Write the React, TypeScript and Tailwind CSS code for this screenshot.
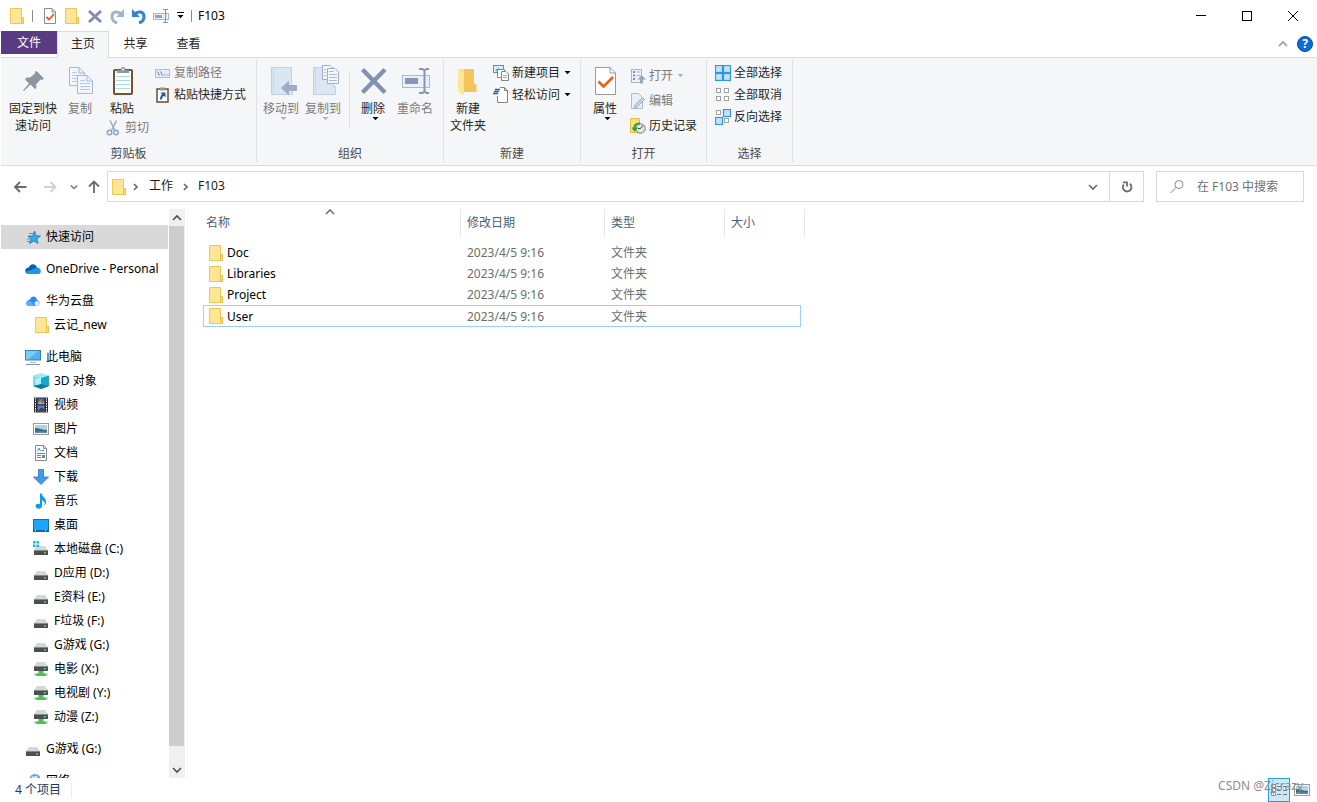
import type { ReactNode } from 'react';

type IconProps = { className?: string };

/* ---------- Icons ---------- */

function FolderIcon({ className = 'h-4 w-4' }: IconProps) {
  return (
    <svg viewBox="0 0 16 16" className={className}>
      <path d="M0.500 0.500H11.500V9.500H13.500V15.500H0.500Z" fill="#ffe694" stroke="#ecc857" />
      <path d="M11.500 9.500H13.500V15.500H11.500Z" fill="#fbdc7c" stroke="#e9c24c" />
    </svg>
  );
}

function CheckDocIcon({ className = 'h-4 w-4' }: IconProps) {
  return (
    <svg viewBox="0 0 16 16" className={className} fill="none">
      <path d="M2.500 0.500H10L13.500 4V15.500H2.500Z" fill="#fff" stroke="#8a8a8a" />
      <path d="M10 0.500V4H13.500" stroke="#8a8a8a" />
      <path d="M4.500 9L7 11.500L12 6" stroke="#f0531c" strokeWidth="1.800" />
    </svg>
  );
}

function CrossIcon() {
  return (
    <svg viewBox="0 0 16 16" className="h-4 w-4" fill="none">
      <path d="M2 3L14 14M14 3L2 14" stroke="#7d8eb0" strokeWidth="3" />
    </svg>
  );
}

function DeleteIcon() {
  return (
    <svg viewBox="0 0 32 32" className="h-8 w-8" fill="none">
      <path d="M5.500 4.500L28 27.500M28 4.500L5.500 27.500" stroke="#8091b3" strokeWidth="4.400" />
    </svg>
  );
}

function RedoIcon() {
  return (
    <svg viewBox="0 0 16 16" className="h-4 w-4" fill="none">
      <path d="M12 6C9 2.500 3 3.500 3 8.500C3 12 5 14 8 15" stroke="#a3b3ca" strokeWidth="3" />
      <path d="M15 1V9H7Z" fill="#a3b3ca" />
    </svg>
  );
}

function UndoIcon() {
  return (
    <svg viewBox="0 0 16 16" className="h-4 w-4" fill="none">
      <path d="M4 6C7 2.500 13 3.500 13 8.500C13 12 11 14 8 15" stroke="#2e86d1" strokeWidth="3" />
      <path d="M1 1V9H9Z" fill="#2e86d1" />
    </svg>
  );
}

function RenameIcon({ className = 'h-4 w-4' }: IconProps) {
  return (
    <svg viewBox="0 0 16 16" className={className} fill="none">
      <rect x="0.500" y="5.500" width="15" height="6" fill="#eef3fb" stroke="#a3b6d3" />
      <rect x="2" y="7" width="7" height="3" fill="#8ea2c5" />
      <path d="M10 1.500H15M12.500 1.500V14.500M10 14.500H15" stroke="#8797b4" strokeWidth="1.200" />
    </svg>
  );
}

function RenameLargeIcon() {
  return (
    <svg viewBox="0 0 32 32" className="h-8 w-8" fill="none">
      <rect x="3.500" y="10.500" width="27" height="12" fill="#e9f0fa" stroke="#a9bad6" />
      <rect x="6" y="13" width="13" height="6" fill="#8497bb" />
      <path d="M20 4H23.500L25.500 5.500L27.500 4H30M25.500 5V27M20 28H23.500L25.500 26.500L27.500 28H30" stroke="#8597b6" strokeWidth="2" />
    </svg>
  );
}

function PinIcon() {
  return (
    <svg viewBox="0 0 32 32" className="h-8 w-8">
      <path d="M19.500 6L27 13.500L25 15L23.500 14.500L19 19.500L19.500 23L18 24L13.500 19.500L7 26L6 25.500L12 18.500L8 14.500L9.500 12.500H13L18 8.500L18 7Z" fill="#8b979f" />
    </svg>
  );
}

function SheetLines({ x, y }: { x: number; y: number }) {
  return (
    <g transform={`translate(${x} ${y})`} fill="none">
      <path d="M0.500 0.500H10L15.500 6V18.500H0.500Z" fill="#f1f6fd" stroke="#a5b8d7" />
      <path d="M10 0.500V6H15.500" stroke="#a5b8d7" />
      <path d="M3 5.500H8M3 8.500H13M3 11.500H13M3 14.500H13" stroke="#b5cbe9" />
    </g>
  );
}

function CopyIcon() {
  return (
    <svg viewBox="0 0 32 32" className="h-8 w-8">
      <SheetLines x={5} y={2} />
      <SheetLines x={13} y={10} />
    </svg>
  );
}

function PasteIcon() {
  return (
    <svg viewBox="0 0 32 32" className="h-8 w-8" fill="none">
      <rect x="8" y="5" width="18" height="24" rx="1" fill="#fff" stroke="#7b4f31" strokeWidth="2" />
      <path d="M10 11.500H24M10 15.500H24M10 19.500H24M10 23.500H24" stroke="#a9d8ef" />
      <path d="M11 8V5H14.500C15 1 19 1 19.500 5H23V8Z" fill="#8e979c" />
      <circle cx="17" cy="4.500" r="1" fill="#fff" />
    </svg>
  );
}

function CutIcon() {
  return (
    <svg viewBox="0 0 16 16" className="h-4 w-4" fill="none">
      <path d="M4 0.500L9 10.500M10.500 0.500L5.500 10.500" stroke="#9aabc5" strokeWidth="1.600" />
      <circle cx="3.500" cy="12.500" r="2.300" stroke="#8fa3c2" strokeWidth="1.400" />
      <circle cx="10" cy="12.500" r="2.300" stroke="#8fa3c2" strokeWidth="1.400" />
    </svg>
  );
}

function PathIcon() {
  return (
    <svg viewBox="0 0 16 16" className="h-4 w-4" fill="none">
      <rect x="0.500" y="4.500" width="14" height="8" fill="#e3ecf8" stroke="#aebfd9" />
      <path d="M2.500 6.500L4.500 10.500M5.500 6.500L7.500 10.500M8.500 10H9.500M10.500 10H11.500M12.500 10H13.500" stroke="#6d81a5" />
    </svg>
  );
}

function PasteShortcutIcon() {
  return (
    <svg viewBox="0 0 16 16" className="h-4 w-4" fill="none">
      <rect x="2" y="2" width="11" height="13" fill="#fff" stroke="#6e4a32" strokeWidth="1.500" />
      <path d="M5 0.500H10V3.500H5Z" fill="#8e979c" />
      <path d="M5.500 5.500H10.500V10.500L8.800 8.800C7.500 9.800 7 11 7 12.500H5C5 10.300 5.700 8.600 7.200 7.200Z" fill="#1c5a9c" />
    </svg>
  );
}

function MoveToIcon() {
  return (
    <svg viewBox="0 0 32 32" className="h-8 w-8">
      <path d="M6.500 2.500H26.500V21.500H27.500V29.500H6.500Z" fill="#dbe6f5" stroke="#c0cfe6" />
      <path d="M8.500 3V29" stroke="#cad8ec" />
      <path d="M16 23L24 15.500V20H32V26H24V30.500Z" fill="#9dadc8" />
    </svg>
  );
}

function CopyToIcon() {
  return (
    <svg viewBox="0 0 32 32" className="h-8 w-8" fill="none">
      <path d="M6.500 2.500H26.500V21.500H28.500V29.500H6.500Z" fill="#dbe6f5" stroke="#c0cfe6" />
      <path d="M8.500 3V29" stroke="#cad8ec" />
      <path d="M15.500 0.500H23L26.500 4V14.500H15.500Z" fill="#f4f8fd" stroke="#9db0cf" />
      <path d="M20.500 3.500H28L31.500 7V18.500H20.500Z" fill="#f4f8fd" stroke="#9db0cf" />
      <path d="M17 4.500H19M17 7.500H19M17 10.500H19M22 6.500H27M22 9.500H30M22 12.500H30M22 15.500H30" stroke="#aabbd6" />
    </svg>
  );
}

function NewFolderIcon() {
  return (
    <svg viewBox="0 0 32 32" className="h-8 w-8">
      <path d="M11 4H22V18L24.500 20V27H11Z" fill="#f2c65c" />
      <path d="M6 4H12L12 24L11 30L6 26Z" fill="#ffe08a" />
      <path d="M6 4L12 8V30L6 26Z" fill="#ffe59c" />
    </svg>
  );
}

function NewItemIcon() {
  return (
    <svg viewBox="0 0 16 16" className="h-4 w-4" fill="none">
      <rect x="0.500" y="0.500" width="10" height="7" fill="#d8effb" stroke="#5c8fb4" />
      <path d="M2 6L5 3L9 6Z" fill="#3e9bce" />
      <path d="M4.500 4.500H11.500V12.500H4.500Z" fill="#fff" stroke="#858585" />
      <path d="M8.500 6.500H13L15.500 9V15.500H8.500Z" fill="#fff" stroke="#858585" />
      <path d="M10 10.500H14M10 12.500H14" stroke="#7fb4d8" />
    </svg>
  );
}

function EasyAccessIcon() {
  return (
    <svg viewBox="0 0 16 16" className="h-4 w-4" fill="none">
      <path d="M4.500 0.500H11.500L14.500 3.500V15.500H4.500Z" fill="#fff" />
      <path d="M7 0.500H11.500L14.500 3.500V15.500H4.500V9M11.500 0.500V3.500H14.500" stroke="#858585" />
      <path d="M2 2.500H7M1 4.500H6M0 6.500H5" stroke="#1667ae" strokeWidth="1.400" />
    </svg>
  );
}

function PropertiesIcon() {
  return (
    <svg viewBox="0 0 32 32" className="h-8 w-8" fill="none">
      <path d="M6.500 2.500H21L26.500 8V29.500H6.500Z" fill="#fff" stroke="#9a9a9a" />
      <path d="M21 2.500V8H26.500" stroke="#9a9a9a" />
      <path d="M9.500 16.500L14.500 21.500L24 12" stroke="#f25a1d" strokeWidth="2.600" />
    </svg>
  );
}

function OpenIcon() {
  return (
    <svg viewBox="0 0 16 16" className="h-4 w-4" fill="none">
      <rect x="1.500" y="1.500" width="10" height="13" fill="#edf2fa" stroke="#a5b5d0" />
      <path d="M3 4H5M3 7.500H5M3 11H5" stroke="#7890b8" strokeWidth="2" />
      <path d="M6.500 4H10M6.500 7.500H10" stroke="#a5b5d0" />
      <path d="M11.500 7L16 11.500H13V15.500H10V11.500H7.500Z" fill="#93a5c4" />
    </svg>
  );
}

function EditIcon() {
  return (
    <svg viewBox="0 0 16 16" className="h-4 w-4" fill="none">
      <path d="M1.500 0.500H8.500L12.500 4.500V15.500H1.500Z" fill="#e8eff9" stroke="#a9badb" />
      <path d="M5 12L12.500 4.500L14.500 6.500L7 14L4.500 14.500Z" fill="#c4d1e6" stroke="#8fa2c4" strokeWidth="0.800" />
    </svg>
  );
}

function HistoryIcon() {
  return (
    <svg viewBox="0 0 16 16" className="h-4 w-4" fill="none">
      <path d="M0.500 0.500H9.500V14.500H0.500Z" fill="#ffe27a" stroke="#e8bf3f" />
      <circle cx="10.500" cy="10.500" r="4.700" fill="#e4e4e4" stroke="#777" />
      <path d="M10.500 10.500L13 7.500M10.500 10.500H8" stroke="#444" />
      <path d="M10 5.500C6 5 4 8 4.500 10" stroke="#27a53a" strokeWidth="2" />
      <path d="M1.500 9.500H8L4.500 14Z" fill="#27a53a" />
    </svg>
  );
}

function SelectIcon({ filled }: { filled: boolean[] }) {
  const cells = [[1, 1], [9, 1], [1, 9], [9, 9]];
  return (
    <svg viewBox="0 0 16 16" className="h-4 w-4">
      {cells.map(([x, y], i) =>
        filled[i] ? (
          <rect key={i} x={x - 0.5} y={y - 0.5} width="7" height="7" fill="#bfe3fb" stroke="#3095e4" strokeWidth="1.200" />
        ) : (
          <rect key={i} x={x + 0.5} y={y + 0.5} width="4" height="4" fill="#fff" stroke="#a2a2a2" />
        ),
      )}
    </svg>
  );
}

function Chevron({ dir, size = 'h-2.5 w-2.5', className = '' }: { dir: 'up' | 'down' | 'right'; size?: string; className?: string }) {
  const paths = { up: 'M1 7L5 3L9 7', down: 'M1 3L5 7L9 3', right: 'M3 2L6 5L3 8' };
  return (
    <svg viewBox="0 0 10 10" className={`${size} ${className}`} fill="none" stroke="currentColor" strokeWidth="1.700">
      <path d={paths[dir]} />
    </svg>
  );
}

function Caret({ className = 'text-black' }: IconProps) {
  return (
    <svg viewBox="0 0 7 4" className={`h-1 w-[7px] ${className}`}>
      <path d="M0.500 0H6.500L3.500 3.200Z" fill="currentColor" />
    </svg>
  );
}

function ArrowIcon({ dir, className = 'text-[#6a6a6a]' }: { dir: 'left' | 'right' | 'up'; className?: string }) {
  const paths = {
    left: 'M14.500 8H3M8 3L3 8L8 13',
    right: 'M2 8H13.500M8.500 3L13.500 8L8.500 13',
    up: 'M8 14V2.500M3 7.500L8 2.500L13 7.500',
  };
  return (
    <svg viewBox="0 0 16 16" className={`h-4 w-4 ${className}`} fill="none" stroke="currentColor" strokeWidth="1.800">
      <path d={paths[dir]} />
    </svg>
  );
}

function StarIcon() {
  return (
    <svg viewBox="0 0 16 16" className="h-4 w-4">
      <path d="M9.500 2L11 6.500L15.500 7L12 9.700L13 14.500L9 12L4.500 14.500L6.200 9.700L3 7H7.700Z" fill="#35a8ec" stroke="#1778c2" strokeWidth="0.800" />
      <path d="M4 4.500H8M2 10H5M2 12.500H5" stroke="#3a9be0" />
    </svg>
  );
}

function OneDriveIcon() {
  return (
    <svg viewBox="0 0 16 16" className="h-4 w-4">
      <path d="M4 6.500C5 2.500 10.500 2 12 6.500L9 9L3 12.500C-0.500 12 -1 6.500 4 6.500Z" fill="#0a5cb5" />
      <path d="M12 6.500C16.500 6.500 17 12.500 13.500 13H3.500C1.500 13 0.500 12 0.500 11L8 8Z" fill="#1e97e4" />
    </svg>
  );
}

function CloudIcon() {
  return (
    <svg viewBox="0 0 16 16" className="h-4 w-4">
      <path d="M5 6.500C6 2.500 11.500 2.500 12 7C15.500 7.500 15.500 13 12 13H4.500C0 13 0 7.500 5 6.500Z" fill="#2f87f7" />
      <path d="M1.500 10C2 7 6 6.500 9 13H4.500C2.500 13 1.500 12 1.500 10Z" fill="#55b1ff" />
      <circle cx="12" cy="10.500" r="2.500" fill="#dceaff" />
    </svg>
  );
}

function ComputerIcon() {
  return (
    <svg viewBox="0 0 16 16" className="h-4 w-4">
      <rect x="0.500" y="1.500" width="15" height="9.500" fill="#4fb4ef" stroke="#3c7ca6" />
      <path d="M1 2H13L3 10.500H1Z" fill="#7ccdf9" />
      <path d="M5 13.500H11" stroke="#a8b8c4" />
      <path d="M1 15.500H15" stroke="#7f93a3" />
    </svg>
  );
}

function CubeIcon() {
  return (
    <svg viewBox="0 0 16 16" className="h-4 w-4">
      <path d="M0 2.500L8 0L16 2.500L8 5Z" fill="#9ceaf3" />
      <path d="M0 2.500L8 5V16L0 13Z" fill="#7fdfe8" />
      <path d="M16 2.500L8 5V16L16 13Z" fill="#1ba6cf" />
      <path d="M2 6L8 5V12L3 12Z" fill="#b5f0f5" />
      <path d="M0 13L8 11L16 13L8 16Z" fill="#0b7f97" />
    </svg>
  );
}

function VideoIcon() {
  return (
    <svg viewBox="0 0 16 16" className="h-4 w-4">
      <rect x="1" y="0.500" width="14" height="15" fill="#2d2d2d" />
      <path d="M2.500 1V15M13.500 1V15" stroke="#fff" strokeDasharray="1.500 1" />
      <rect x="4.500" y="1.500" width="7" height="6" fill="#3f6fd0" />
      <rect x="4.500" y="8.500" width="7" height="6" fill="#4b80dd" />
      <path d="M5 6L8 3L11 5V7H5Z" fill="#d8a036" />
      <path d="M5 14L8 10.500L11 12V14Z" fill="#4a3b2a" />
      <circle cx="9" cy="4.500" r="1.200" fill="#c7402f" />
    </svg>
  );
}

function PictureIcon() {
  return (
    <svg viewBox="0 0 16 16" className="h-4 w-4">
      <rect x="0.500" y="2.500" width="15" height="11" fill="#fff" stroke="#9b9b9b" />
      <rect x="2" y="4" width="12" height="8" fill="#a9d4f2" />
      <path d="M2 7C6 7 9 9 14 9V12H2Z" fill="#3d6c74" />
      <path d="M2 10.500H14V12H2Z" fill="#5d8fbd" />
    </svg>
  );
}

function DocumentIcon() {
  return (
    <svg viewBox="0 0 16 16" className="h-4 w-4" fill="none">
      <path d="M2.500 0.500H10.500L13.500 3.500V15.500H2.500Z" fill="#fff" stroke="#8c8c8c" />
      <path d="M10.500 0.500V3.500H13.500" stroke="#8c8c8c" />
      <path d="M4.500 6L6 3L7.500 6M8.500 5.500H11M4 8.500H12M4 10.500H8M4 12.500H8" stroke="#3a94d4" />
      <rect x="9" y="10" width="3" height="3" fill="#5d8aa8" />
    </svg>
  );
}

function DownloadIcon() {
  return (
    <svg viewBox="0 0 16 16" className="h-4 w-4">
      <path d="M5.500 0.500H10.500V8H15.500L8 15.500L0.500 8H5.500Z" fill="#3d9be9" stroke="#2a79c0" strokeWidth="0.800" />
    </svg>
  );
}

function MusicIcon() {
  return (
    <svg viewBox="0 0 16 16" className="h-4 w-4">
      <path d="M7 0.500H9C9 4 13.500 5 13 9.500C13 11 12 12 11.500 12.500C12 9.500 11.500 8 9 7.500V13C9 16.500 2.500 16.500 2.500 13.200C2.500 11 5 10.300 7 11Z" fill="#0c9bf0" />
    </svg>
  );
}

function DesktopIcon() {
  return (
    <svg viewBox="0 0 16 16" className="h-4 w-4">
      <rect x="0.500" y="2.500" width="15" height="12" fill="#1ea5fb" stroke="#0d72b8" />
      <path d="M1 13.500H15" stroke="#0b5f9e" />
      <path d="M2 13.500H4M12 13.500H14" stroke="#fff" strokeDasharray="1 1" />
    </svg>
  );
}

function DriveIcon({ kind = 'plain' }: { kind?: 'plain' | 'windows' | 'network' }) {
  const top = kind === 'network' ? 1 : kind === 'windows' ? 5 : 6;
  return (
    <svg viewBox="0 0 16 16" className="h-4 w-4">
      <g transform={`translate(0 ${top})`}>
        <path d="M4 0H12L15 4H1Z" fill="#d5d8da" />
        <rect x="1" y="4" width="14" height="5" rx="0.500" fill="#4c4f52" />
        <path d="M1 4.500H15" stroke="#85898c" />
        <rect x="11" y="6" width="2" height="1.500" fill="#41e04b" />
      </g>
      {kind === 'windows' && (
        <path d="M0 0H2.500V2.500H0ZM3.500 0H6V2.500H3.500ZM0 3.500H2.500V6H0ZM3.500 3.500H6V6H3.500Z" fill="#12b5ee" />
      )}
      {kind === 'network' && (
        <>
          <path d="M1 13.500H15" stroke="#c3c8c5" strokeWidth="2" />
          <path d="M5.500 10H10.500V12.500H13V15H3V12.500H5.500Z" fill="#4cc152" />
        </>
      )}
    </svg>
  );
}

function NetworkIcon() {
  return (
    <svg viewBox="0 0 16 16" className="h-4 w-4">
      <circle cx="10" cy="6.500" r="5.500" fill="#5ba7cf" />
      <path d="M6 4C8 2 9 5 11 2.500L13 4L10 7Z" fill="#d2ecf5" />
      <rect x="1" y="6" width="9" height="7" fill="#78c6ee" stroke="#4a7f9f" />
    </svg>
  );
}

/* ---------- Ribbon pieces ---------- */

function BigButton({ icon, lines, width = 'w-[42px]', disabled, caret }: {
  icon: ReactNode;
  lines: string[];
  width?: string;
  disabled?: boolean;
  caret?: boolean;
}) {
  return (
    <button type="button" disabled={disabled} className={`flex flex-col items-center pt-[5px] ${width} ${disabled ? 'text-[#7b7b7b]' : 'text-[#262626]'}`}>
      {icon}
      <span className="mt-[3px] flex flex-col whitespace-nowrap leading-[17px]">
        {lines.map((line) => (
          <span key={line}>{line}</span>
        ))}
      </span>
      {caret && (
        <span className="pl-1">
          <Caret className={disabled ? 'text-[#b5b5b5]' : 'text-black'} />
        </span>
      )}
    </button>
  );
}

function SmallButton({ icon, label, disabled, caret }: {
  icon: ReactNode;
  label: string;
  disabled?: boolean;
  caret?: boolean;
}) {
  return (
    <button type="button" disabled={disabled} className={`flex items-center gap-[3px] whitespace-nowrap leading-[22px] ${disabled ? 'text-[#7b7b7b]' : 'text-[#262626]'}`}>
      {icon}
      {label}
      {caret && (
        <span className="pl-px">
          <Caret className={disabled ? 'text-[#b5b5b5]' : 'text-black'} />
        </span>
      )}
    </button>
  );
}

function RibbonGroup({ label, className = '', children }: { label: string; className?: string; children: ReactNode }) {
  return (
    <section aria-label={label} className="flex flex-col border-r border-[#e0e1e2]">
      <div className={`flex flex-1 items-start ${className}`}>{children}</div>
      <div className="text-center leading-[17px] text-[#4a4a4a]">{label}</div>
    </section>
  );
}

/* ---------- Data ---------- */

type NavEntry = { label: string; icon: ReactNode; child?: boolean; active?: boolean };

const navGroups: NavEntry[][] = [
  [{ label: '快速访问', icon: <StarIcon />, active: true }],
  [{ label: 'OneDrive - Personal', icon: <OneDriveIcon /> }],
  [
    { label: '华为云盘', icon: <CloudIcon /> },
    { label: '云记_new', icon: <FolderIcon className="ml-0.5 h-4 w-4" />, child: true },
  ],
  [
    { label: '此电脑', icon: <ComputerIcon /> },
    { label: '3D 对象', icon: <CubeIcon />, child: true },
    { label: '视频', icon: <VideoIcon />, child: true },
    { label: '图片', icon: <PictureIcon />, child: true },
    { label: '文档', icon: <DocumentIcon />, child: true },
    { label: '下载', icon: <DownloadIcon />, child: true },
    { label: '音乐', icon: <MusicIcon />, child: true },
    { label: '桌面', icon: <DesktopIcon />, child: true },
    { label: '本地磁盘 (C:)', icon: <DriveIcon kind="windows" />, child: true },
    { label: 'D应用 (D:)', icon: <DriveIcon />, child: true },
    { label: 'E资料 (E:)', icon: <DriveIcon />, child: true },
    { label: 'F垃圾 (F:)', icon: <DriveIcon />, child: true },
    { label: 'G游戏 (G:)', icon: <DriveIcon />, child: true },
    { label: '电影 (X:)', icon: <DriveIcon kind="network" />, child: true },
    { label: '电视剧 (Y:)', icon: <DriveIcon kind="network" />, child: true },
    { label: '动漫 (Z:)', icon: <DriveIcon kind="network" />, child: true },
  ],
  [{ label: 'G游戏 (G:)', icon: <DriveIcon /> }],
  [{ label: '网络', icon: <NetworkIcon /> }],
];

const files = ['Doc', 'Libraries', 'Project', 'User'];

/* ---------- Sections ---------- */

function TitleBar() {
  return (
    <header className="flex h-[31px] shrink-0 items-center justify-between">
      <div className="flex items-center gap-1.5 pl-[9px]">
        <FolderIcon />
        <span className="mr-[3px] h-3 w-px bg-[#8c8c8c]" />
        <button type="button" aria-label="属性"><CheckDocIcon /></button>
        <button type="button" aria-label="新建文件夹"><FolderIcon className="ml-px h-4 w-4" /></button>
        <button type="button" aria-label="删除"><CrossIcon /></button>
        <button type="button" aria-label="恢复"><RedoIcon /></button>
        <button type="button" aria-label="撤消"><UndoIcon /></button>
        <button type="button" aria-label="重命名"><RenameIcon /></button>
        <button type="button" aria-label="自定义快速访问工具栏" className="flex w-2.5 flex-col items-center gap-0.5">
          <span className="h-px w-[7px] bg-black" />
          <Caret />
        </button>
        <span className="h-3 w-px bg-[#8c8c8c]" />
        <h1 className="text-black">F103</h1>
      </div>
      <div className="flex pr-px">
        <button type="button" aria-label="最小化" className="flex h-[30px] w-[46px] items-center justify-center">
          <span className="h-px w-2.5 bg-black" />
        </button>
        <button type="button" aria-label="最大化" className="flex h-[30px] w-[46px] items-center justify-center">
          <span className="h-2.5 w-2.5 border border-black" />
        </button>
        <button type="button" aria-label="关闭" className="flex h-[30px] w-[46px] items-center justify-center">
          <svg viewBox="0 0 10 10" className="h-2.5 w-2.5" stroke="#000">
            <path d="M0 0L10 10M10 0L0 10" />
          </svg>
        </button>
      </div>
    </header>
  );
}

function RibbonTabs() {
  return (
    <div className="relative flex h-[27px] shrink-0 items-start border-b border-[#dadbdc] text-[#262626]">
      <button type="button" className="h-[23px] w-14 bg-[#5a3b81] text-white">文件</button>
      {/* active tab sits over the ribbon's top edge */}
      <button type="button" className="-mb-px h-[27px] w-[52px] border border-b-0 border-[#dadbdc] bg-[#f5f6f7] pb-1">主页</button>
      <button type="button" className="h-[25px] w-[53px]">共享</button>
      <button type="button" className="h-[25px] w-[53px]">查看</button>
      <div className="ml-auto flex h-full items-center gap-[9px] pr-1">
        <button type="button" aria-label="最小化功能区" className="text-[#9b9b9b]"><Chevron dir="up" /></button>
        <button type="button" aria-label="帮助" className="h-4 w-4 rounded-full border border-[#0b4a87] bg-[#0a6cd6] text-center font-bold leading-[14px] text-white">?</button>
      </div>
    </div>
  );
}

function Ribbon() {
  return (
    <div className="flex h-[108px] shrink-0 border-b border-[#dadbdc] bg-[#f5f6f7] pt-0.5 pb-[3px]">
      <RibbonGroup label="剪贴板" className="pr-[10px]">
        <BigButton icon={<PinIcon />} lines={['固定到快', '速访问']} width="w-16" />
        <BigButton icon={<CopyIcon />} lines={['复制']} width="w-[30px]" disabled />
        <div className="flex w-[54px] flex-col items-center">
          <BigButton icon={<PasteIcon />} lines={['粘贴']} />
          <div className="self-end">
            <SmallButton icon={<CutIcon />} label="剪切" disabled />
          </div>
        </div>
        <div className="pt-0.5 pl-1.5">
          <SmallButton icon={<PathIcon />} label="复制路径" disabled />
          <SmallButton icon={<PasteShortcutIcon />} label="粘贴快捷方式" />
        </div>
      </RibbonGroup>

      <RibbonGroup label="组织" className="pr-[7px] pl-[3px]">
        <BigButton icon={<MoveToIcon />} lines={['移动到']} disabled caret />
        <BigButton icon={<CopyToIcon />} lines={['复制到']} disabled caret />
        <span className="mt-3 mr-0.5 ml-[5px] h-14 w-px bg-[#e0e1e2]" />
        <BigButton icon={<DeleteIcon />} lines={['删除']} caret />
        <BigButton icon={<RenameLargeIcon />} lines={['重命名']} disabled />
      </RibbonGroup>

      <RibbonGroup label="新建" className="pr-[9px]">
        <BigButton icon={<NewFolderIcon />} lines={['新建', '文件夹']} width="w-12" />
        <div className="pt-0.5 pl-px">
          <SmallButton icon={<NewItemIcon />} label="新建项目" caret />
          <SmallButton icon={<EasyAccessIcon />} label="轻松访问" caret />
        </div>
      </RibbonGroup>

      <RibbonGroup label="打开" className="pr-[9px]">
        <BigButton icon={<PropertiesIcon />} lines={['属性']} width="w-12" caret />
        <div className="flex flex-col gap-[3px] pt-[5px] pl-px">
          <SmallButton icon={<OpenIcon />} label="打开" disabled caret />
          <SmallButton icon={<EditIcon />} label="编辑" disabled />
          <SmallButton icon={<HistoryIcon />} label="历史记录" />
        </div>
      </RibbonGroup>

      <RibbonGroup label="选择" className="pt-0.5 pr-[10px] pl-2">
        <div>
          <SmallButton icon={<SelectIcon filled={[true, true, true, true]} />} label="全部选择" />
          <SmallButton icon={<SelectIcon filled={[false, false, false, false]} />} label="全部取消" />
          <SmallButton icon={<SelectIcon filled={[false, true, true, false]} />} label="反向选择" />
        </div>
      </RibbonGroup>
    </div>
  );
}

function AddressBar() {
  return (
    <div className="flex shrink-0 items-center pt-[5px] pr-[13px] pb-[7px] pl-[11px]">
      <div className="flex w-[95px] items-center pr-[5px]">
        <button type="button" aria-label="后退"><ArrowIcon dir="left" /></button>
        <button type="button" aria-label="前进" className="pl-3.5"><ArrowIcon dir="right" className="text-[#d2d2d2]" /></button>
        <button type="button" aria-label="最近浏览的位置" className="pl-3 text-[#777]"><Chevron dir="down" size="h-2 w-2" /></button>
        <button type="button" aria-label="上移" className="ml-auto"><ArrowIcon dir="up" /></button>
      </div>
      <nav aria-label="地址" className="flex h-[31px] flex-1 items-center border border-[#d9d9d9] pl-1 text-[#1a1a1a]">
        <FolderIcon />
        <span className="pr-2 pl-[3px] text-[#6b6b6b]"><Chevron dir="right" /></span>
        <a href="#work" className="pb-0.5">工作</a>
        <span className="pr-[7px] pl-2 text-[#6b6b6b]"><Chevron dir="right" /></span>
        <a href="#f103" className="pb-0.5">F103</a>
        <button type="button" aria-label="以前的位置" className="ml-auto flex h-full w-8 items-center justify-center text-[#6b6b6b]">
          <Chevron dir="down" />
        </button>
        <button type="button" aria-label="刷新" className="flex h-full w-[34px] items-center justify-center border-l border-[#d9d9d9]">
          <svg viewBox="0 0 16 16" className="h-4 w-4" fill="none" stroke="#6b6b6b" strokeWidth="1.800">
            <path d="M10.800 4.800A4.300 4.300 0 1 1 4.800 5.500" />
            <path d="M4 3.300H8V7.500" />
          </svg>
        </button>
      </nav>
      <div className="ml-3 flex h-[31px] w-[148px] items-center gap-3 border border-[#d9d9d9] pl-3">
        <svg viewBox="0 0 16 16" className="h-4 w-4 shrink-0" fill="none" stroke="#8a8a8a">
          <circle cx="10" cy="5.500" r="4" />
          <path d="M7 8.500L1.500 14" />
        </svg>
        <input type="search" aria-label="在 F103 中搜索" placeholder="在 F103 中搜索" className="w-full min-w-0 outline-none placeholder:text-[#6f6f6f]" />
      </div>
    </div>
  );
}

function Sidebar() {
  return (
    <div className="flex w-[187px] shrink-0 border-r border-[#f5f5f5]">
      <nav aria-label="导航窗格" className="flex flex-1 flex-col gap-2 overflow-hidden pt-4">
        {navGroups.map((group, i) => (
          <ul key={i}>
            {group.map((entry) => (
              <li key={entry.label}>
                <a
                  href="#nav"
                  className={`flex h-6 items-center gap-[5px] whitespace-nowrap text-black ${entry.child ? 'pl-8' : 'pl-6'} ${entry.active ? 'bg-[#d9d9d9]' : ''}`}
                >
                  <span className="w-4 shrink-0">{entry.icon}</span>
                  <span className="pb-0.5">{entry.label}</span>
                </a>
              </li>
            ))}
          </ul>
        ))}
      </nav>
      <div className="mr-0.5 ml-px flex w-4 flex-col bg-[#f0f0f0] text-[#505050]">
        <button type="button" aria-label="向上滚动" className="flex h-[17px] items-center justify-center"><Chevron dir="up" /></button>
        <span className="mr-px flex-1 bg-[#cdcdcd]" />
        <button type="button" aria-label="向下滚动" className="mt-[15px] flex h-[17px] items-center justify-center"><Chevron dir="down" /></button>
      </div>
    </div>
  );
}

function FileList() {
  return (
    <main className="flex-1 overflow-hidden pl-[15px]">
      <table className="w-[602px] table-fixed border-separate border-spacing-0 text-left">
        <colgroup>
          <col className="w-[258px]" />
          <col className="w-36" />
          <col className="w-[120px]" />
          <col className="w-[76px]" />
          <col className="w-1" />
        </colgroup>
        <thead>
          <tr className="h-7 text-[#4c607a]">
            <th className="relative border-r border-[#e5e5e5] pb-0.5 pl-[3px] font-normal">
              名称
              <Chevron dir="up" className="absolute -top-0.5 left-[122px] text-[#777]" />
            </th>
            <th className="border-r border-[#e5e5e5] pb-0.5 pl-1.5 font-normal">修改日期</th>
            <th className="border-r border-[#e5e5e5] pb-0.5 pl-1.5 font-normal">类型</th>
            <th colSpan={2} className="border-r border-[#e5e5e5] pb-0.5 pl-1.5 font-normal">大小</th>
          </tr>
        </thead>
        <tbody className="text-[#6d6d6d] before:block before:h-[5px]">
          {files.map((name) => {
            const selected = name === 'User';
            const edge = selected ? 'border-[#99d1ff]' : 'border-transparent';
            return (
              <tr key={name} className={selected ? 'h-[22px]' : 'h-[21px]'}>
                <td className={`border-y border-l pl-[5px] ${edge}`}>
                  <a href="#file" className="flex items-center gap-0.5 text-black">
                    <FolderIcon />
                    {name}
                  </a>
                </td>
                <td className={`border-y pl-1.5 ${edge}`}>2023/4/5 9:16</td>
                <td className={`border-y pl-1.5 ${edge}`}>文件夹</td>
                <td className={`border-y border-r ${edge}`} />
                <td />
              </tr>
            );
          })}
        </tbody>
      </table>
    </main>
  );
}

function StatusBar() {
  return (
    <footer className="relative flex h-6 shrink-0 items-center pr-[7px] pl-3.5 text-[#1e395b]">
      <span className="pb-0.5">4 个项目</span>
      <span className="ml-2.5 h-4 w-px bg-[#ededed]" />
      <div className="ml-auto flex items-center gap-1">
        <button type="button" aria-label="详细信息" className="flex h-6 w-[22px] items-center justify-center border border-[#26a0da] bg-[#cbe8f6]">
          <svg viewBox="0 0 16 16" className="h-4 w-4" fill="none">
            <path d="M0.500 2.500H4.500V5.500H0.500ZM0.500 6.500H4.500V9.500H0.500ZM0.500 10.500H4.500V13.500H0.500Z" fill="#fff" stroke="#8f8f8f" />
            <path d="M6 4.500H10M12 4.500H16M6 8.500H10M12 8.500H16M6 12.500H10M12 12.500H16" stroke="#6d7d89" />
            <path d="M2 12H3" stroke="#d33" />
          </svg>
        </button>
        <button type="button" aria-label="大缩略图"><PictureIcon /></button>
      </div>
      <span className="absolute right-3.5 bottom-2 text-[#8d8d8d]">CSDN @Zjcrazy</span>
    </footer>
  );
}

export default function App() {
  return (
    <div className="flex h-screen flex-col overflow-hidden bg-white pl-px font-['Noto_Sans','Noto_Sans_CJK_SC',sans-serif] text-[12px] leading-[17px]">
      <TitleBar />
      <RibbonTabs />
      <Ribbon />
      <AddressBar />
      <div className="flex min-h-0 flex-1">
        <Sidebar />
        <FileList />
      </div>
      <StatusBar />
    </div>
  );
}
